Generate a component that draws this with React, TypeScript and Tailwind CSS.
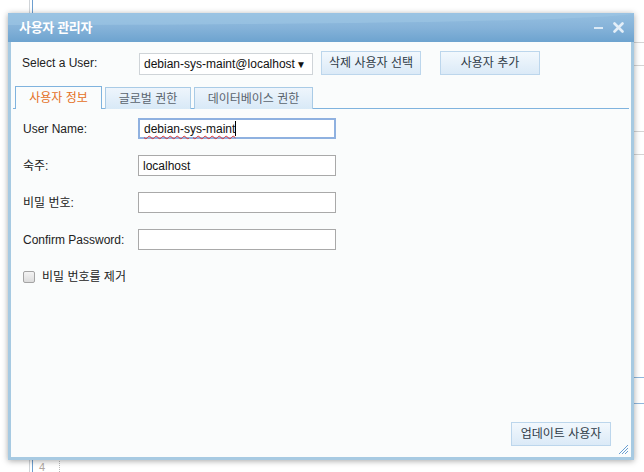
const font = { fontFamily: '"Liberation Sans", "Noto Sans CJK KR", sans-serif' };

const formRows = [
  { label: 'User Name:', value: 'debian-sys-maint', focused: true },
  { label: '숙주:', value: 'localhost' },
  { label: '비밀 번호:', value: '' },
  { label: 'Confirm Password:', value: '' },
];

const tabs = [
  { name: '사용자 정보', w: 'w-[87px]', active: true },
  { name: '글로벌 권한', w: 'w-[86px]' },
  { name: '데이터베이스 권한', w: 'w-[119px]' },
];

function Btn({ children, className = '' }: { children: React.ReactNode; className?: string }) {
  return (
    <button
      className={`h-[24px] w-[100px] border border-[#bcd6ec] bg-gradient-to-b from-[#f2f8fd] to-[#dbeaf7] text-[12px] text-[#2e3a46] ${className}`}
    >
      {children}
    </button>
  );
}

export default function App() {
  return (
    <div className="relative w-[644px] h-[472px] overflow-hidden bg-white text-[#222]" style={font}>
      {/* page behind the window */}
      <div className="absolute left-[29px] top-0 h-full w-px bg-[#d0d4d8]" />
      <div className="absolute left-[32px] top-0 h-full w-px bg-[#6d9fd0]" />
      <div className="absolute left-[59px] top-[440px] h-[32px] border-l border-dotted border-[#b8b8b8]" />
      <span className="absolute left-[39px] top-[459px] text-[11px] text-[#b0a6a0]">4</span>
      <div className="absolute left-[634px] top-[42px] h-px w-[10px] bg-[#d4d4d4]" />
      <div className="absolute left-[634px] top-[65px] h-px w-[10px] bg-[#d4d4d4]" />
      <div className="absolute left-[634px] top-[131px] h-px w-[10px] bg-[#d4d4d4]" />
      <div className="absolute left-[634px] top-[154px] h-px w-[10px] bg-[#d4d4d4]" />
      <div className="absolute left-[634px] top-[377px] h-px w-[10px] bg-[#8fb6dc]" />
      <div className="absolute left-[634px] top-[403px] h-px w-[10px] bg-[#8fb6dc]" />

      {/* window */}
      <div className="absolute left-[8px] top-[13px] w-[626px] h-[447px] flex flex-col bg-[#a7cae2] px-[3px] pb-[3px] shadow-[0_1px_6px_rgba(0,0,0,0.35)]">
        <div className="relative h-[29px] -mx-[3px] flex items-center justify-between pl-[11px] pr-[10px] bg-gradient-to-b from-[#95bfe0] via-[#86b3d9] to-[#6da3cf] overflow-hidden">
          <div className="absolute inset-x-0 top-0 h-[12px] bg-[#9fc6e4] opacity-60 rounded-br-[100%]" />
          <span className="relative text-[13px] font-bold text-white tracking-tight">사용자 관리자</span>
          <div className="relative flex items-center gap-[10px]">
            <div className="w-[9px] h-[2px] bg-[#dbe9f5] mt-[1px]" />
            <svg width="11" height="11" viewBox="0 0 11 11">
              <path d="M1.5 1.5 L9.5 9.5 M9.5 1.5 L1.5 9.5" stroke="#e3eef8" strokeWidth="2.6" strokeLinecap="round" />
            </svg>
          </div>
        </div>

        <div className="relative flex-1 flex flex-col bg-[#fafcfc] pt-[8px] px-[2px]">
          {/* user select row */}
          <div className="flex items-center pl-[9px]">
            <span className="w-[117px] text-[12px]">Select a User:</span>
            <div className="h-[22px] w-[174px] mt-[3px] flex items-center justify-between whitespace-nowrap border border-[#cfd4d8] bg-white pl-[4px] pr-[6px] text-[12px] text-[#111]">
              <span>debian-sys-maint@localhost</span>
              <span className="text-[10px]">▼</span>
            </div>
            <Btn className="ml-[8px]">삭제 사용자 선택</Btn>
            <Btn className="ml-[19px]">사용자 추가</Btn>
          </div>

          {/* tabs */}
          <div className="mt-[11px] flex gap-[3px] border-b border-[#7fb3de] pl-[2px] h-[23px]">
            {tabs.map((t) =>
              t.active ? (
                <div
                  key={t.name}
                  className={`${t.w} h-[23px] -mb-px flex items-center justify-center border border-b-0 border-[#7fb3de] bg-[#fafcfc] text-[12px] text-[#e4701e]`}
                >
                  {t.name}
                </div>
              ) : (
                <div
                  key={t.name}
                  className={`${t.w} h-[22px] mt-[1px] flex items-center justify-center border border-b-0 border-[#a9cbe6] bg-gradient-to-b from-[#eef5fc] to-[#d8e9f7] text-[12px] text-[#5a646e]`}
                >
                  {t.name}
                </div>
              )
            )}
          </div>

          {/* form */}
          <div className="flex flex-col pt-[9px] pl-[10px]">
            {formRows.map((r) => (
              <div key={r.label} className="flex items-center h-[21px] mb-[16px]">
                <span className="w-[115px] text-[12px] text-[#222]">{r.label}</span>
                <div
                  className={`h-[21px] w-[198px] flex items-center bg-white pl-[4px] text-[12px] text-[#111] ${
                    r.focused ? 'border-2 border-[#8fb1e0]' : 'border border-[#a9a9a9]'
                  }`}
                >
                  {r.focused ? (
                    <span className="underline decoration-wavy decoration-[#e03030] decoration-1 underline-offset-2">
                      {r.value}
                    </span>
                  ) : (
                    r.value
                  )}
                  {r.focused && <span className="w-px h-[15px] bg-black" />}
                </div>
              </div>
            ))}
            <label className="flex items-center gap-[7px] mt-[2px] text-[12px] text-[#222]">
              <span className="w-[12px] h-[12px] rounded-[2px] border border-[#a4a4a4] bg-gradient-to-b from-[#f4f4f4] to-[#dcdcdc]" />
              비밀 번호를 제거
            </label>
          </div>

          <div className="mt-auto flex justify-end pr-[18px] pb-[11px]">
            <Btn className="h-[23px]">업데이트 사용자</Btn>
          </div>

          <svg className="absolute right-[2px] bottom-[2px]" width="12" height="12" viewBox="0 0 12 12">
            <path d="M11 2 L2 11 M11 5 L5 11 M11 8 L8 11" stroke="#6a9fd2" strokeWidth="1" />
          </svg>
        </div>
      </div>
    </div>
  );
}
